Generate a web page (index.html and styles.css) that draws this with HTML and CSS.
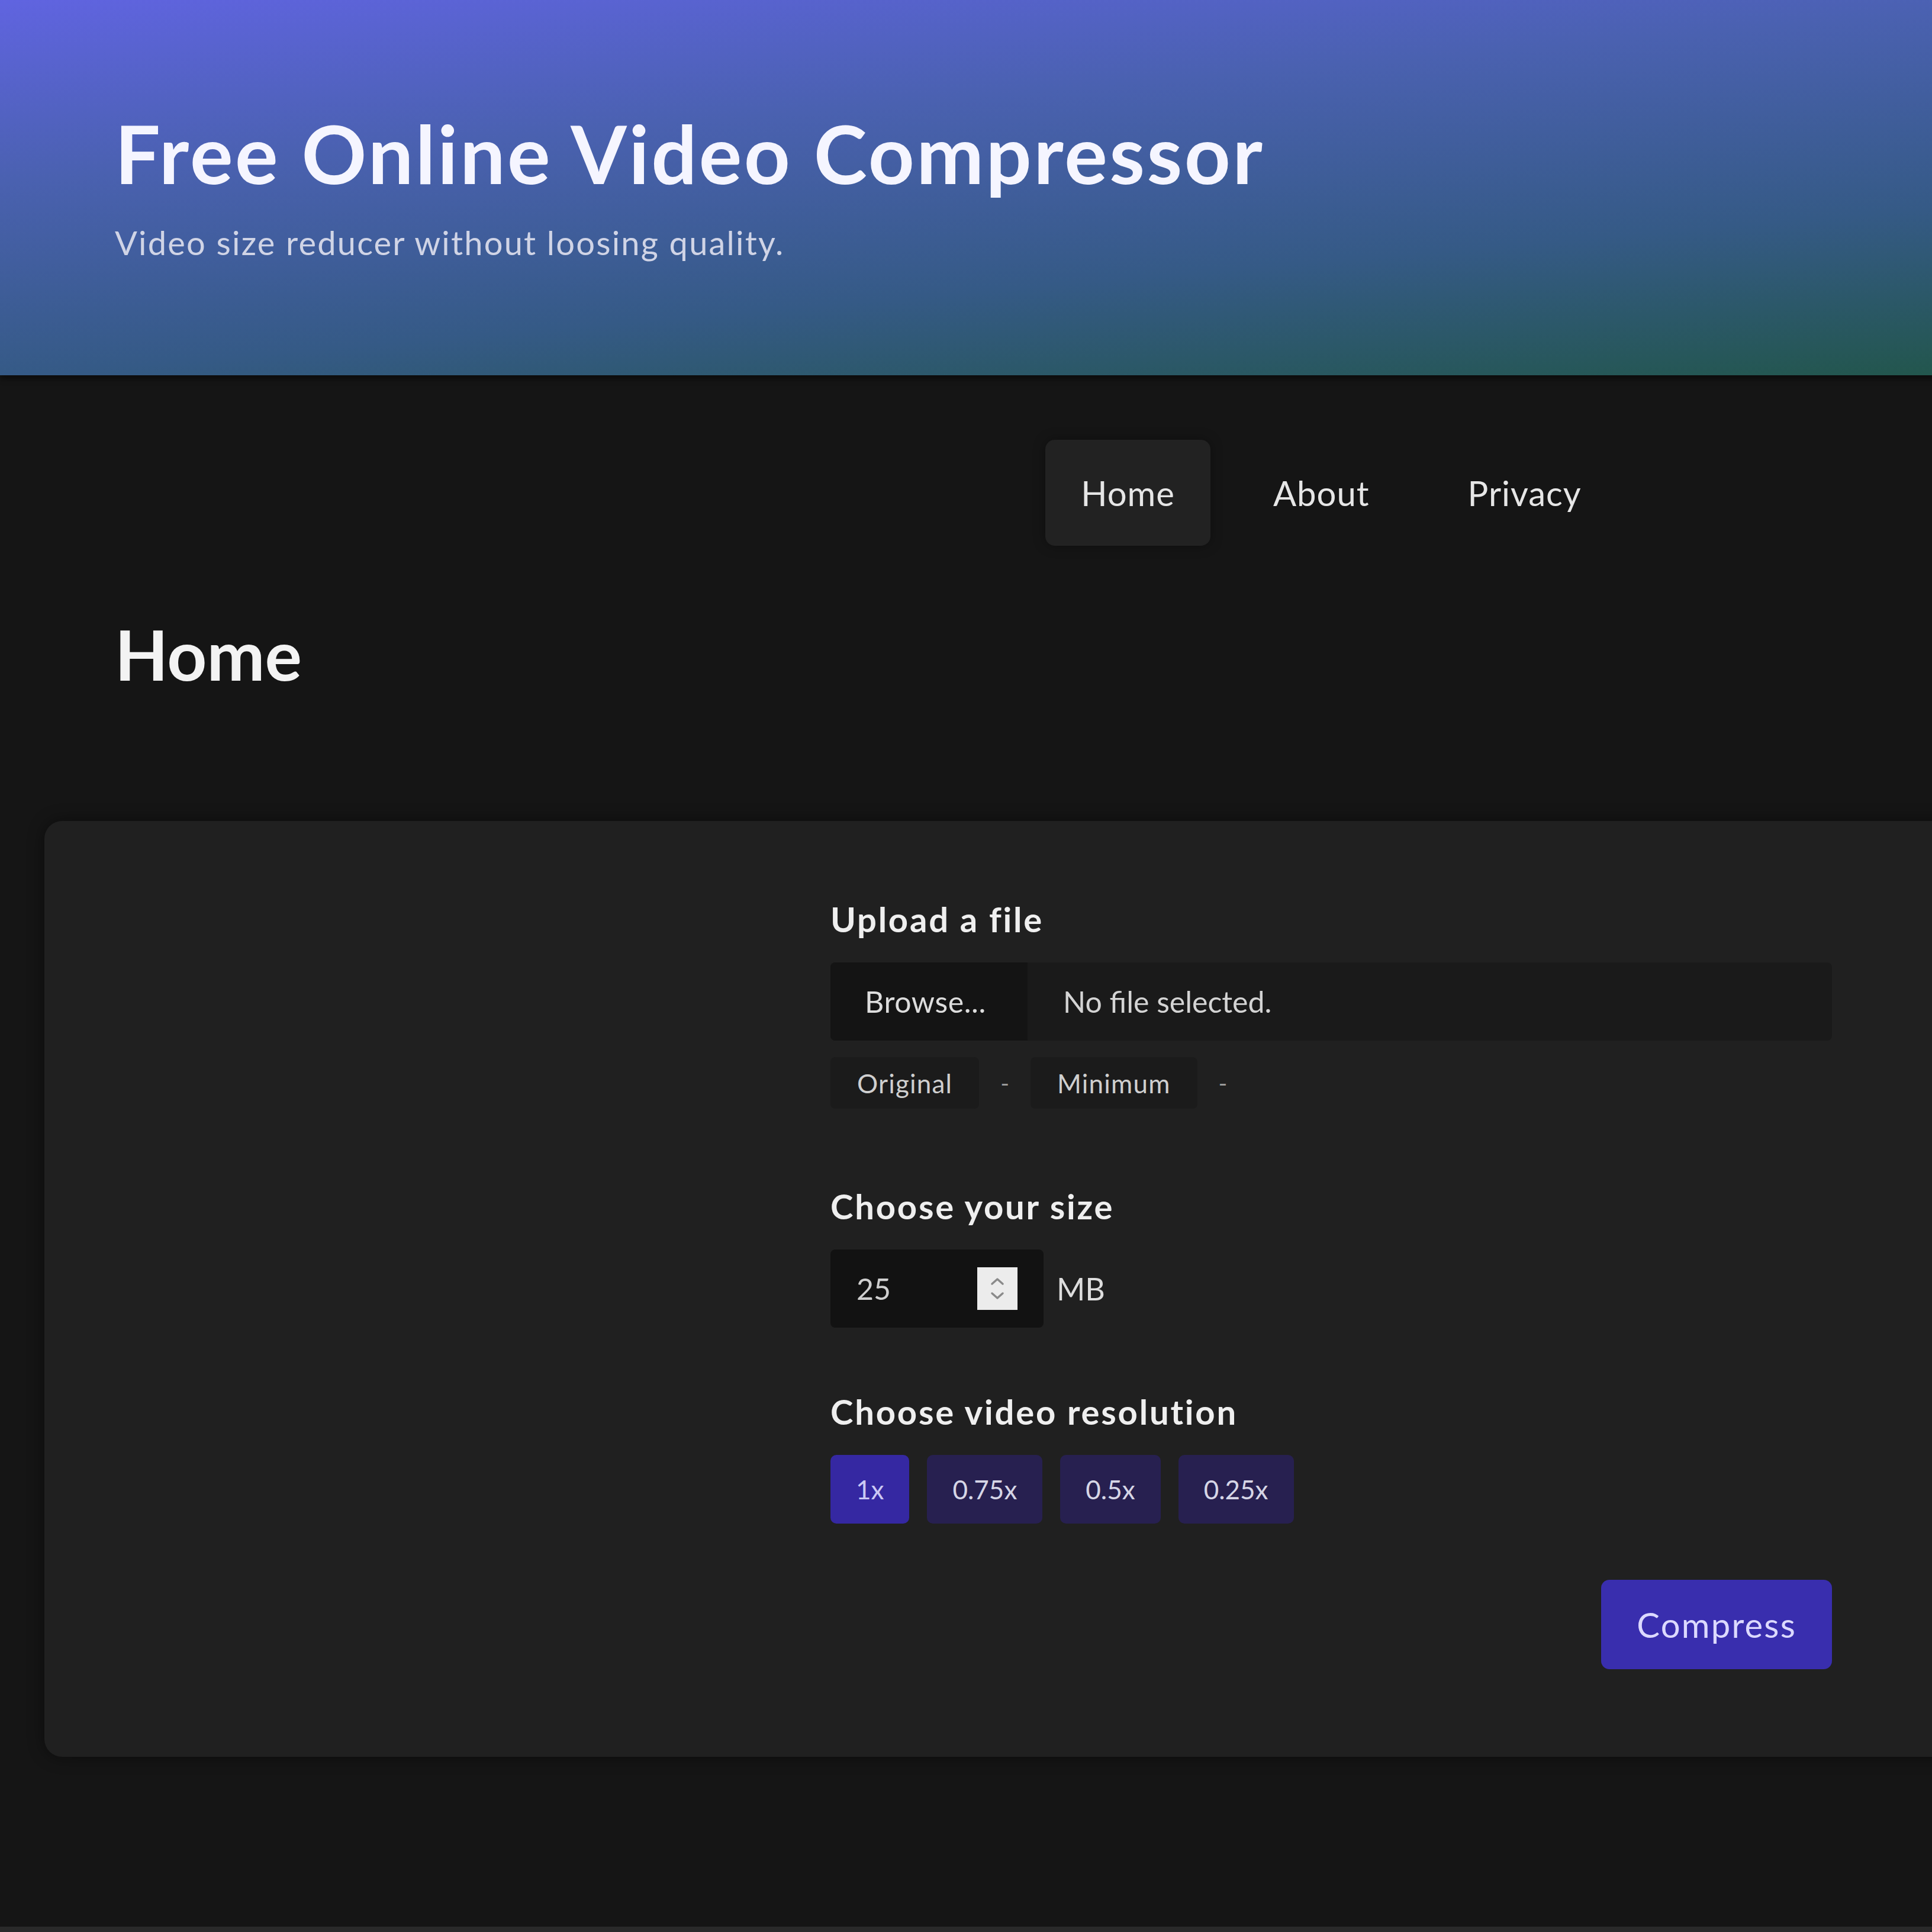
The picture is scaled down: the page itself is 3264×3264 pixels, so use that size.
FILE: index.html
```html
<!DOCTYPE html>
<html lang="en">
<head>
<meta charset="utf-8">
<title>Free Online Video Compressor</title>
<link rel="stylesheet" href="styles.css">
</head>
<body>
<div class="page">
  <header class="hero">
    <h1 class="hero-title">Free Online Video Compressor</h1>
    <p class="hero-sub">Video size reducer without loosing quality.</p>
  </header>

  <nav class="nav">
    <a class="nav-link is-active" href="#">Home</a>
    <a class="nav-link" href="#">About</a>
    <a class="nav-link" href="#">Privacy</a>
  </nav>

  <main class="main">
    <h2 class="page-title">Home</h2>

    <section class="card">
      <form class="form">
        <div class="field field-upload">
          <label class="field-label">Upload a file</label>
          <div class="file-input">
            <span class="file-btn">Browse...</span>
            <span class="file-name">No file selected.</span>
          </div>
          <div class="chips">
            <span class="chip">Original</span>
            <span class="dash">-</span>
            <span class="chip">Minimum</span>
            <span class="dash">-</span>
          </div>
        </div>

        <div class="field">
          <label class="field-label">Choose your size</label>
          <div class="size-row">
            <div class="num-input">
              <span class="num-value">25</span>
              <svg class="spinner" viewBox="0 0 68 72" aria-hidden="true">
                <rect width="68" height="72" fill="#ececec"/>
                <path d="M25 28 L34 20 L43 28" fill="none" stroke="#8a8a8a" stroke-width="3.5" stroke-linecap="round" stroke-linejoin="round"/>
                <path d="M25 44 L34 52 L43 44" fill="none" stroke="#8a8a8a" stroke-width="3.5" stroke-linecap="round" stroke-linejoin="round"/>
              </svg>
            </div>
            <span class="unit">MB</span>
          </div>
        </div>

        <div class="field field-res">
          <label class="field-label">Choose video resolution</label>
          <div class="res-row">
            <span class="res-btn is-active">1x</span>
            <span class="res-btn">0.75x</span>
            <span class="res-btn">0.5x</span>
            <span class="res-btn">0.25x</span>
          </div>
        </div>

        <div class="actions">
          <span class="compress">Compress</span>
        </div>
      </form>
    </section>
  </main>

  <footer class="footer"></footer>
</div>
</body>
</html>
```

FILE: styles.css
```css
html, body {
  margin: 0;
  padding: 0;
  background: #151515;
  overflow: hidden;
}

body {
  font-family: Lato, "Open Sans", "DejaVu Sans", sans-serif;
}

.page {
  width: 4498px;
}

/* Header */
.hero {
  position: relative;
  z-index: 1;
  height: 634px;
  box-sizing: border-box;
  padding: 181px 0 0 194px;
  background: linear-gradient(175deg, #6064e0 0%, #4a61b0 30%, #355a86 62%, #22564c 90%, #1f574a 100%);
  box-shadow: 0 6px 10px rgba(0, 0, 0, 0.45);
}

.hero-title {
  margin: 0;
  font-size: 136px;
  line-height: 156px;
  font-weight: 700;
  letter-spacing: 3.4px;
  color: #f5f5ff;
}

.hero-sub {
  margin: 38px 0 0;
  font-size: 56px;
  line-height: 70px;
  letter-spacing: 2.2px;
  color: #d0d4e6;
}

/* Nav */
.nav {
  display: flex;
  justify-content: center;
  gap: 46px;
  margin-top: 109px;
}

.nav-link {
  padding: 50px 60px;
  font-size: 58px;
  line-height: 79px;
  letter-spacing: 1px;
  color: #e6e6e6;
  text-decoration: none;
  border-radius: 16px;
}

.nav-link.is-active {
  background: #222222;
  box-shadow: 0 0 20px rgba(0, 0, 0, 0.35);
}

/* Main */
.main {
  padding: 0 75px;
}

.page-title {
  margin: 113px 0 212px 119px;
  font-size: 117px;
  line-height: 140px;
  font-weight: 700;
  color: #f3f3f3;
}

.card {
  background: #202020;
  border-radius: 30px;
  box-shadow: 0 0 28px rgba(0, 0, 0, 0.45);
  padding: 130px 0 148px;
}

.form {
  width: 1692px;
  margin: 0 auto;
}

.field {
  margin-bottom: 106px;
}

.field-upload {
  margin-bottom: 129px;
}

.field-res {
  margin-bottom: 95px;
}

.field-label {
  display: block;
  margin-bottom: 37px;
  font-size: 58px;
  line-height: 72px;
  font-weight: 700;
  letter-spacing: 2.8px;
  color: #efefef;
}

/* File input */
.file-input {
  display: flex;
  align-items: center;
  height: 132px;
  background: #1a1a1a;
  border-radius: 8px;
  overflow: hidden;
}

.file-btn {
  align-self: stretch;
  display: flex;
  align-items: center;
  width: 333px;
  box-sizing: border-box;
  padding-left: 58px;
  background: #141414;
  font-size: 50px;
  letter-spacing: 0.6px;
  color: #dddddd;
}

.file-name {
  margin-left: 60px;
  font-size: 50px;
  color: #d4d4d4;
}

.chips {
  display: flex;
  align-items: center;
  gap: 36px;
  margin-top: 28px;
}

.chip {
  display: flex;
  align-items: center;
  height: 87px;
  padding: 0 45px;
  background: #1b1b1b;
  border-radius: 8px;
  font-size: 44px;
  letter-spacing: 1.2px;
  color: #cfcfcf;
}

.dash {
  font-size: 40px;
  color: #9a9a9a;
}

/* Size */
.size-row {
  display: flex;
  align-items: center;
  gap: 22px;
}

.num-input {
  display: flex;
  align-items: center;
  justify-content: space-between;
  width: 360px;
  height: 132px;
  box-sizing: border-box;
  padding: 0 44px;
  background: #121212;
  border-radius: 8px;
}

.num-value {
  font-size: 50px;
  color: #cfcfcf;
}

.spinner {
  display: block;
  width: 68px;
  height: 72px;
}

.unit {
  font-size: 52px;
  color: #dddddd;
}

/* Resolution */
.res-row {
  display: flex;
  gap: 30px;
}

.res-btn {
  display: flex;
  align-items: center;
  height: 116px;
  padding: 0 43px;
  background: #272050;
  border-radius: 10px;
  font-size: 44px;
  color: #d6d6e6;
}

.res-btn.is-active {
  background: #3528a2;
  color: #cbc8f4;
}

/* Actions */
.actions {
  display: flex;
  justify-content: flex-end;
}

.compress {
  display: flex;
  align-items: center;
  height: 151px;
  padding: 0 60px;
  background: #392eae;
  border-radius: 14px;
  font-size: 58px;
  letter-spacing: 2.2px;
  color: #dcd9ff;
}

.footer {
  height: 60px;
  margin-top: 287px;
  background: #2a2a2a;
}
```
